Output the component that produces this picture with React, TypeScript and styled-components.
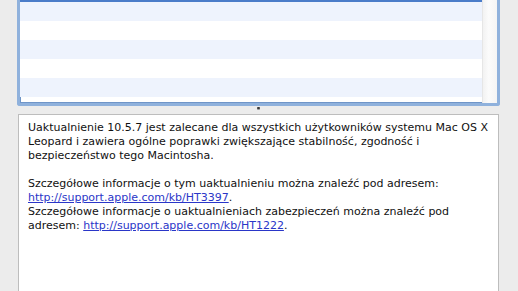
import React from "react";
import styled, { createGlobalStyle } from "styled-components";

const GlobalStyle = createGlobalStyle`
  html, body {
    margin: 0;
    padding: 0;
    background: #ececec;
    overflow: hidden;
  }
`;

const rows = [0, 1, 2, 3, 4];

export default function App() {
  return (
    <>
      <GlobalStyle />
      <Window>
        <ListPanel>
          <ListBody>
            <Rows>
              <SelectedEdge />
              {rows.map((i) => (
                <Row key={i} $odd={i % 2 === 1} />
              ))}
            </Rows>
            <Scroller />
          </ListBody>
        </ListPanel>
        <Splitter>
          <Grip />
        </Splitter>
        <NotesPanel>
          <Para>
            Uaktualnienie 10.5.7 jest zalecane dla wszystkich użytkowników
            systemu Mac OS X Leopard i zawiera ogólne poprawki zwiększające
            stabilność, zgodność i bezpieczeństwo tego Macintosha.
          </Para>
          <Para>
            Szczegółowe informacje o tym uaktualnieniu można znaleźć pod
            adresem: <Link href="#">http://support.apple.com/kb/HT3397</Link>.
            <br />
            Szczegółowe informacje o uaktualnieniach zabezpieczeń można znaleźć
            pod adresem: <Link href="#">http://support.apple.com/kb/HT1222</Link>.
          </Para>
        </NotesPanel>
      </Window>
    </>
  );
}

const Window = styled.div`
  width: 518px;
  height: 291px;
  display: flex;
  flex-direction: column;
  padding-left: 17px;
  box-sizing: border-box;
`;

const ListPanel = styled.div`
  width: 483px;
  height: 106px;
  box-sizing: border-box;
  border: 3px solid #8fb1dc;
  border-top: none;
  border-radius: 0 0 3px 3px;
  box-shadow: inset 0 -1px 0 #6f95c8, inset 1px 0 0 #6f95c8, inset -1px 0 0 #6f95c8;
  background: #fff;
  overflow: hidden;
`;

const ListBody = styled.div`
  display: flex;
  height: 100%;
`;

const Rows = styled.div`
  flex: 1;
  display: flex;
  flex-direction: column;
`;

const SelectedEdge = styled.div`
  height: 2px;
  background: #4a7cc9;
  flex-shrink: 0;
`;

const Row = styled.div<{ $odd: boolean }>`
  height: 19px;
  flex-shrink: 0;
  background: ${(p) => (p.$odd ? "#ffffff" : "#eef3fd")};
`;

const Scroller = styled.div`
  width: 14px;
  background: linear-gradient(to right, #f2f2f2, #fbfbfb 40%, #f4f4f4);
  border-left: 1px solid #e6e6e6;
`;

const Splitter = styled.div`
  height: 8px;
  width: 483px;
  display: flex;
  justify-content: center;
  align-items: flex-start;
`;

const Grip = styled.div`
  width: 3px;
  height: 2px;
  margin-top: 1px;
  border-radius: 1px;
  background: #3a3a3a;
  box-shadow: 0 1px 0 #9a9a9a;
`;

const NotesPanel = styled.div`
  width: 481px;
  margin-left: 1px;
  flex: 1;
  box-sizing: border-box;
  background: #fff;
  border: 1px solid #bdbdbd;
  border-bottom: none;
  padding: 6px 8px 0 9px;
  font-family: "DejaVu Sans", "Liberation Sans", sans-serif;
  font-size: 11px;
  line-height: 14px;
  color: #111;
`;

const Para = styled.p`
  margin: 0 0 14px;
`;

const Link = styled.a`
  color: #2a36c8;
  text-decoration: underline;
`;
